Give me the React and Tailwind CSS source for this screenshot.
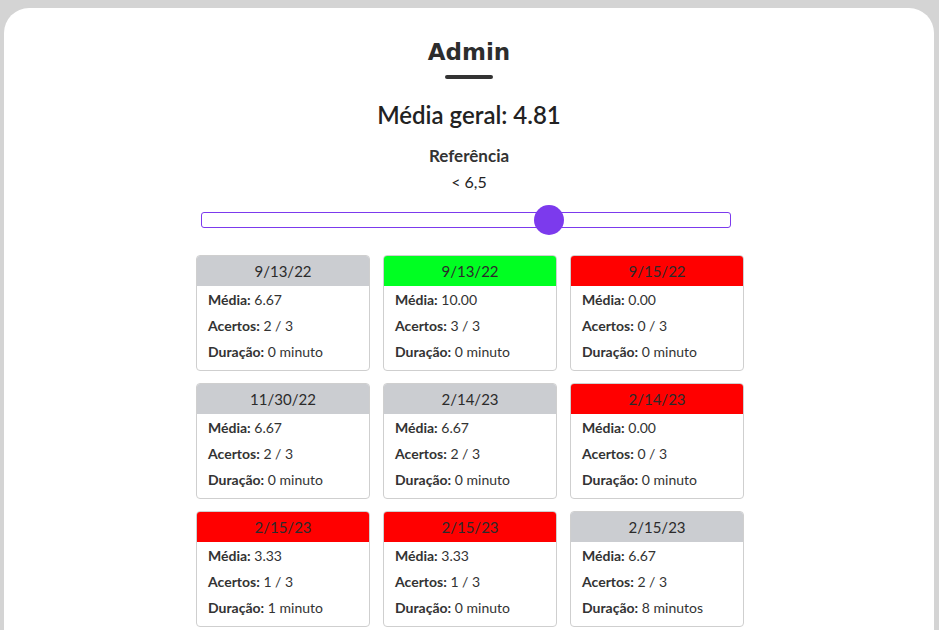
import React from 'react';

const provas = [
    { data: '9/13/22', media: '6.67', acertos: '2 / 3', duracao: '0 minuto', cor: 'cinza' },
    { data: '9/13/22', media: '10.00', acertos: '3 / 3', duracao: '0 minuto', cor: 'verde' },
    { data: '9/15/22', media: '0.00', acertos: '0 / 3', duracao: '0 minuto', cor: 'vermelho' },
    { data: '11/30/22', media: '6.67', acertos: '2 / 3', duracao: '0 minuto', cor: 'cinza' },
    { data: '2/14/23', media: '6.67', acertos: '2 / 3', duracao: '0 minuto', cor: 'cinza' },
    { data: '2/14/23', media: '0.00', acertos: '0 / 3', duracao: '0 minuto', cor: 'vermelho' },
    { data: '2/15/23', media: '3.33', acertos: '1 / 3', duracao: '1 minuto', cor: 'vermelho' },
    { data: '2/15/23', media: '3.33', acertos: '1 / 3', duracao: '0 minuto', cor: 'vermelho' },
    { data: '2/15/23', media: '6.67', acertos: '2 / 3', duracao: '8 minutos', cor: 'cinza' },
];

const cores = {
    cinza: 'bg-[#cbcdd1]',
    verde: 'bg-[#00ff22]',
    vermelho: 'bg-[#ff0000]',
};

const Cartao = ({ prova }) => (
    <div className="w-[174px] h-[116px] border border-[#cfcfcf] rounded-[4px] overflow-hidden bg-white">
        <div className={`${cores[prova.cor]} h-[30px] flex items-center justify-center text-[15px] text-[#2b2b2b]`}>
            {prova.data}
        </div>
        <div className="px-[11px] pt-[1px] text-[14px] text-[#333] leading-[26px]">
            <p><span className="font-bold">Média:</span> {prova.media}</p>
            <p><span className="font-bold">Acertos:</span> {prova.acertos}</p>
            <p><span className="font-bold">Duração:</span> {prova.duracao}</p>
        </div>
    </div>
);

const App = () => {
    return (
        <div className="w-[939px] h-[630px] overflow-hidden bg-[#d4d4d4] pl-[4px] pr-[5px] pt-[8px]" style={{ fontFamily: 'Lato, "Noto Sans", sans-serif' }}>
            <div className="bg-white rounded-t-[25px] h-[700px] flex flex-col items-center">
                <h1 className="mt-[29px] text-[23px] leading-[30px] font-black text-[#2d2d2d]" style={{ fontFamily: '"DejaVu Sans", sans-serif' }}>
                    Admin
                </h1>
                <div className="mt-[8px] w-[48px] h-[4px] rounded-full bg-[#333]"></div>
                <h2 className="mt-[21px] text-[24px] leading-[30px] font-semibold text-[#222]">Média geral: 4.81</h2>
                <h3 className="mt-[15px] text-[17px] leading-[22px] font-bold text-[#333]">Referência</h3>
                <p className="mt-[5px] text-[16px] leading-[20px] text-[#222]">&lt; 6,5</p>
                <div className="mt-[20px] relative w-[530px] h-[16px] border border-[#7c3aed] rounded-[3px] mr-[6px]">
                    <div className="absolute left-[332px] top-[-8px] w-[30px] h-[30px] rounded-full bg-[#7c3aed]"></div>
                </div>
                <div className="mt-[27px] grid grid-cols-3 gap-x-[13px] gap-y-[12px] ml-[2px]">
                    {provas.map((p, i) => (
                        <Cartao key={i} prova={p} />
                    ))}
                </div>
            </div>
        </div>
    );
};

export default App;
